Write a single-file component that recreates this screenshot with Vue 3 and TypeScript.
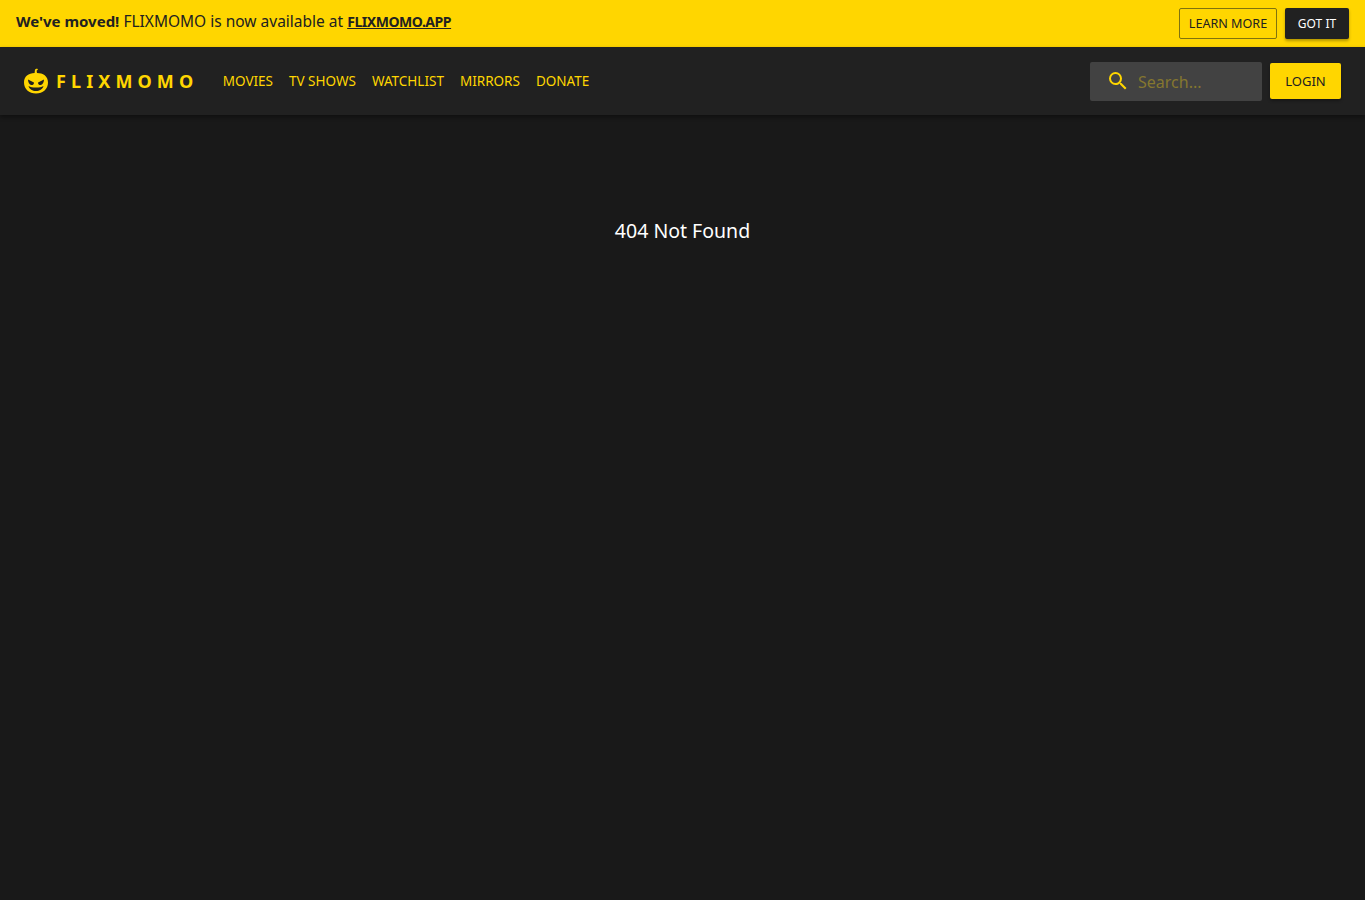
<script setup lang="ts">
const links: string[] = ['MOVIES', 'TV SHOWS', 'WATCHLIST', 'MIRRORS', 'DONATE']
</script>

<template>
  <div class="page">
    <div class="banner">
      <p class="banner-text">
        <b>We've moved!</b> FLIXMOMO is now available at <a class="banner-link" href="#">FLIXMOMO.APP</a>
      </p>
      <div class="banner-actions">
        <button class="btn-outline">LEARN MORE</button>
        <button class="btn-dark">GOT IT</button>
      </div>
    </div>
    <header class="nav">
      <a class="logo" href="#">
        <svg class="logo-icon" viewBox="0 0 24 26" width="24" height="26">
          <path fill="#ffd600" d="M11 1.5 13 .5l1 1-1.4 1.2.4 2.3c6 .1 11 3 11 9.500 0 6.500-5 11-12 11S0 21 0 14.500C0 8.300 4.500 5.300 10.600 5Z" />
          <path fill="#212121" d="M4 11.500l6 3c0 2-1.500 2.800-3 2.500-1.800-.4-3-3-3-5.500Zm16 0-6 3c0 2 1.500 2.800 3 2.500 1.800-.4 3-3 3-5.500ZM4.500 18c2 1.300 4 1.500 7.500 1.500s5.500-.2 7.500-1.500c-1 3.500-4 5-7.500 5s-6.500-1.500-7.500-5Z" />
        </svg>
        <span class="logo-text">FLIXMOMO</span>
      </a>
      <nav class="links">
        <a v-for="link in links" :key="link" href="#">{{ link }}</a>
      </nav>
      <div class="spacer"></div>
      <label class="search">
        <svg viewBox="0 0 24 24" width="24" height="24">
          <path fill="#ffd600" d="M15.500 14h-.79l-.28-.27A6.470 6.470 0 0 0 16 9.500 6.500 6.500 0 1 0 9.500 16c1.610 0 3.090-.59 4.230-1.570l.27.280v.79l5 4.990L20.490 19l-4.990-5Zm-6 0C7.010 14 5 11.990 5 9.500S7.010 5 9.500 5 14 7.010 14 9.500 11.990 14 9.500 14Z" />
        </svg>
        <input type="text" placeholder="Search..." />
      </label>
      <button class="btn-login">LOGIN</button>
    </header>
    <main class="content">
      <p>404 Not Found</p>
    </main>
  </div>
</template>

<style>
html, body {
  margin: 0;
  background: #191919;
}
</style>

<style scoped>
.page {
  min-height: 900px;
  background: #191919;
  font-family: 'Noto Sans', 'Open Sans', sans-serif;
}

.banner {
  height: 47px;
  box-sizing: border-box;
  background: #ffd600;
  display: flex;
  align-items: flex-start;
  justify-content: space-between;
  padding: 8px 16px;
  color: #212121;
}

.banner-text {
  margin: 3px 0 0;
  font-size: 15.500px;
  line-height: 20px;
}

.banner-text b {
  font-size: 15px;
}

.banner-link {
  color: #212121;
  font-weight: 700;
  font-size: 14px;
  letter-spacing: -0.45px;
}

.banner-actions {
  display: flex;
  gap: 8px;
}

button {
  font-family: inherit;
  cursor: pointer;
}

.btn-outline, .btn-dark {
  height: 31px;
  font-size: 12px;
  border-radius: 2px;
  padding: 0;
}

.btn-outline {
  width: 98px;
  background: transparent;
  color: #212121;
  border: 1px solid #80730f;
  font-size: 12.600px;
}

.btn-dark {
  width: 64px;
  background: #212121;
  color: #fff;
  border: none;
  box-shadow: 0 2px 3px rgba(0, 0, 0, 0.3);
}

.nav {
  height: 68px;
  box-sizing: border-box;
  background: #212121;
  display: flex;
  align-items: center;
  padding: 0 24px;
  box-shadow: 0 2px 4px rgba(0, 0, 0, 0.4);
}

.logo {
  display: flex;
  align-items: center;
  text-decoration: none;
  color: #ffd600;
  margin-right: 24.500px;
}

.logo-text {
  margin-left: 8px;
  font-size: 18px;
  font-weight: 700;
  letter-spacing: 5.100px;
  line-height: 24px;
}

.links {
  display: flex;
  gap: 16px;
  margin-top: -1px;
}

.links a {
  color: #ffd600;
  text-decoration: none;
  font-size: 13.500px;
  line-height: 20px;
}

.spacer {
  flex: 1;
}

.search {
  width: 172px;
  height: 39px;
  box-sizing: border-box;
  background: #424242;
  border-radius: 2px;
  display: flex;
  align-items: center;
  padding: 0 16px;
  gap: 6px;
}

.search input {
  width: 100px;
  flex: 1;
  min-width: 0;
  background: transparent;
  border: none;
  outline: none;
  font-family: inherit;
  font-size: 16px;
  line-height: 20px;
  padding: 2px 2px 0;
  color: #ffd600;
}

.search input::placeholder {
  color: #85772f;
  opacity: 1;
}

.btn-login {
  margin-left: 8px;
  width: 71px;
  height: 36px;
  padding: 0;
  background: #ffd600;
  color: #212121;
  border: none;
  border-radius: 2px;
  font-size: 13px;
  box-shadow: 0 2px 3px rgba(0, 0, 0, 0.3);
}

.content {
  padding-top: 103px;
  text-align: center;
  color: #fff;
  font-size: 19.500px;
  line-height: 26px;
}

.content p {
  margin: 0;
}
</style>
